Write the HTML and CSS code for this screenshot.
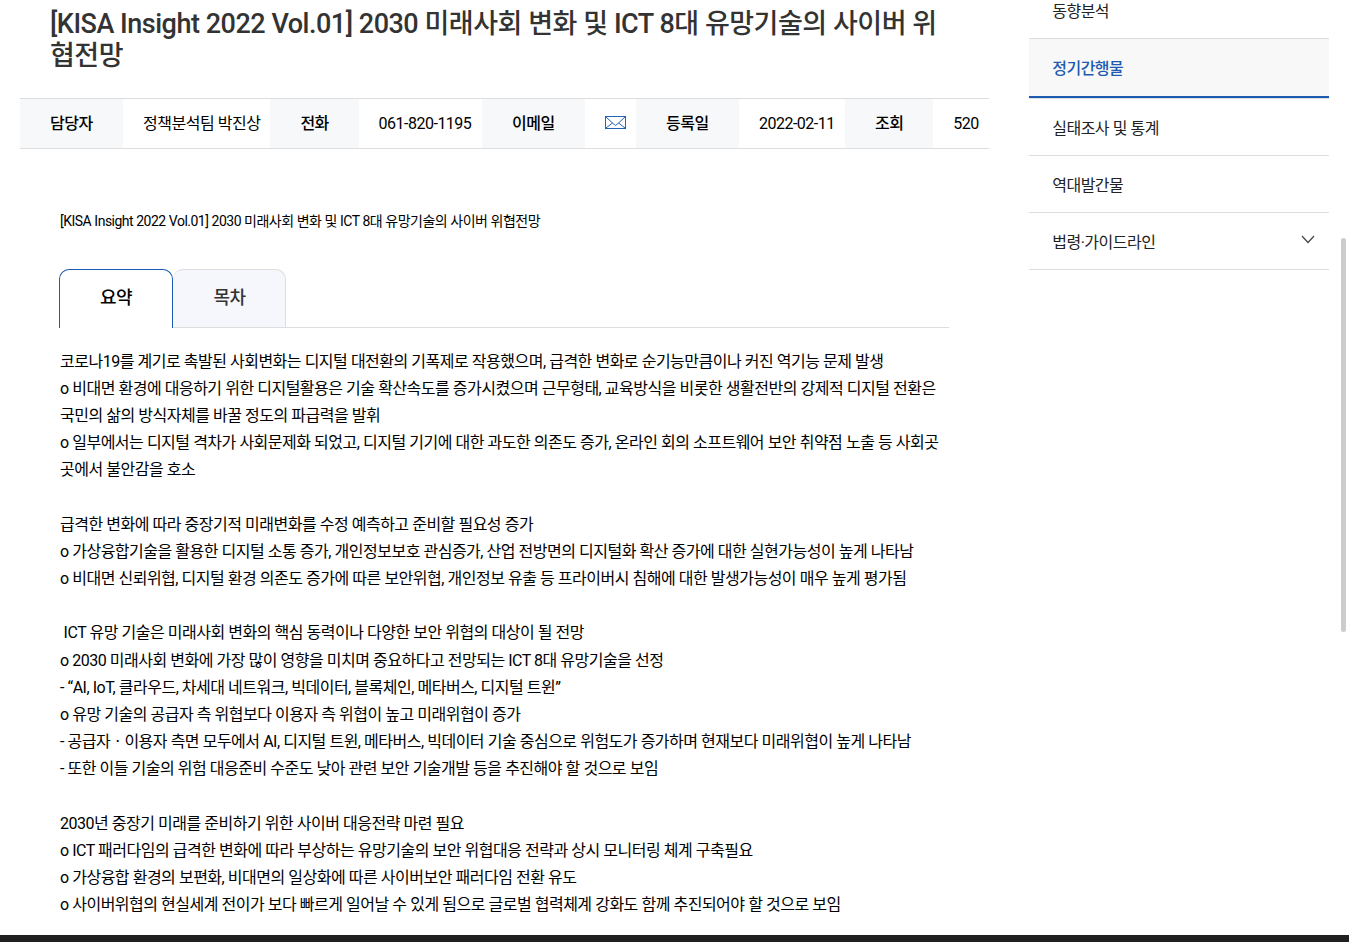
FILE: index.html
```html
<!DOCTYPE html>
<html lang="ko">
<head>
  <meta charset="UTF-8">
  <meta name="viewport" content="width=device-width, initial-scale=1.0">
  <title>KISA Insight 2022 Vol.01</title>
  <link rel="stylesheet" href="styles.css">
</head>
<body>
  <div class="page">
    <main class="content">
      <h1 class="title">[KISA Insight 2022 Vol.01] 2030 미래사회 변화 및 ICT 8대 유망기술의 사이버 위<br>협전망</h1>

      <dl class="info">
        <dt>담당자</dt>
        <dd class="w-name">정책분석팀 박진상</dd>
        <dt class="short">전화</dt>
        <dd class="w-tel">061-820-1195</dd>
        <dt>이메일</dt>
        <dd class="w-mail">
          <svg class="mail" viewBox="0 0 21 13" width="21" height="13">
            <rect x="0.5" y="0.5" width="20" height="12" />
            <path d="M1 1l7 6.500 2.500 2 2.500-2L20 1M1 12l6.500-5M20 12l-6.500-5" />
          </svg>
        </dd>
        <dt>등록일</dt>
        <dd class="w-date">2022-02-11</dd>
        <dt class="short">조회</dt>
        <dd class="w-hit">520</dd>
      </dl>

      <div class="view">
        <p class="subject">[KISA Insight 2022 Vol.01] 2030 미래사회 변화 및 ICT 8대 유망기술의 사이버 위협전망</p>

        <ul class="tabs">
          <li class="tab active">요약</li>
          <li class="tab">목차</li>
        </ul>

        <div class="summary">
          <p>코로나19를 계기로 촉발된 사회변화는 디지털 대전환의 기폭제로 작용했으며, 급격한 변화로 순기능만큼이나 커진 역기능 문제 발생<br>
          o 비대면 환경에 대응하기 위한 디지털활용은 기술 확산속도를 증가시켰으며 근무형태, 교육방식을 비롯한 생활전반의 강제적 디지털 전환은<br>
          국민의 삶의 방식자체를 바꿀 정도의 파급력을 발휘<br>
          o 일부에서는 디지털 격차가 사회문제화 되었고, 디지털 기기에 대한 과도한 의존도 증가, 온라인 회의 소프트웨어 보안 취약점 노출 등 사회곳<br>
          곳에서 불안감을 호소</p>

          <p>급격한 변화에 따라 중장기적 미래변화를 수정 예측하고 준비할 필요성 증가<br>
          o 가상융합기술을 활용한 디지털 소통 증가, 개인정보보호 관심증가, 산업 전방면의 디지털화 확산 증가에 대한 실현가능성이 높게 나타남<br>
          o 비대면 신뢰위협, 디지털 환경 의존도 증가에 따른 보안위협, 개인정보 유출 등 프라이버시 침해에 대한 발생가능성이 매우 높게 평가됨</p>

          <p>&nbsp;ICT 유망 기술은 미래사회 변화의 핵심 동력이나 다양한 보안 위협의 대상이 될 전망<br>
          o 2030 미래사회 변화에 가장 많이 영향을 미치며 중요하다고 전망되는 ICT 8대 유망기술을 선정<br>
          - “AI, IoT, 클라우드, 차세대 네트워크, 빅데이터, 블록체인, 메타버스, 디지털 트윈”<br>
          o 유망 기술의 공급자 측 위협보다 이용자 측 위협이 높고 미래위협이 증가<br>
          - 공급자ㆍ이용자 측면 모두에서 AI, 디지털 트윈, 메타버스, 빅데이터 기술 중심으로 위험도가 증가하며 현재보다 미래위협이 높게 나타남<br>
          - 또한 이들 기술의 위험 대응준비 수준도 낮아 관련 보안 기술개발 등을 추진해야 할 것으로 보임</p>

          <p>2030년 중장기 미래를 준비하기 위한 사이버 대응전략 마련 필요<br>
          o ICT 패러다임의 급격한 변화에 따라 부상하는 유망기술의 보안 위협대응 전략과 상시 모니터링 체계 구축필요<br>
          o 가상융합 환경의 보편화, 비대면의 일상화에 따른 사이버보안 패러다임 전환 유도<br>
          o 사이버위협의 현실세계 전이가 보다 빠르게 일어날 수 있게 됨으로 글로벌 협력체계 강화도 함께 추진되어야 할 것으로 보임</p>
        </div>
      </div>
    </main>

    <nav class="side">
      <ul>
        <li class="first">동향분석</li>
        <li class="active">정기간행물</li>
        <li>실태조사 및 통계</li>
        <li>역대발간물</li>
        <li>법령·가이드라인
          <svg class="arrow" viewBox="0 0 14 9" width="14" height="9"><path d="M1 1l6 6.500L13 1" /></svg>
        </li>
      </ul>
    </nav>
  </div>

  <div class="scrollbar"></div>
  <footer class="bottom"></footer>
</body>
</html>
```

FILE: styles.css
```css
* {
  box-sizing: border-box;
}
body {
  margin: 0;
  height: 942px;
  overflow: hidden;
  display: flex;
  flex-direction: column;
  background: #fff;
  color: #000;
  font-family: Roboto, "Noto Sans CJK KR", sans-serif;
  font-size: 16px;
  font-weight: 400;
  letter-spacing: -0.5px;
  word-spacing: 0.12px;
}
h1, p, ul, dl, dd {
  margin: 0;
  padding: 0;
  list-style: none;
}
.page {
  display: flex;
  gap: 40px;
  height: 935px;
  padding: 0 20px;
}
.content {
  width: 969px;
}
.title {
  height: 98px;
  padding: 8px 0 0 30px;
  color: #333;
  font-size: 27px;
  font-weight: 500;
  line-height: 32px;
  letter-spacing: -0.5px;
  white-space: nowrap;
}

/* document info row */
.info {
  display: flex;
  height: 51px;
  border-top: 1px solid #ddd;
  border-bottom: 1px solid #ddd;
  line-height: 49px;
  white-space: nowrap;
}
.info dt {
  width: 103px;
  padding-left: 30px;
  background: #f6f8fa;
  font-weight: 500;
}
.info dt.short {
  width: 88.200px;
}
.info dd {
  padding-left: 20px;
}
.w-name {
  width: 147.400px;
}
.w-tel {
  width: 123.400px;
}
.w-mail {
  width: 51px;
}
.w-date {
  width: 106px;
}
.w-hit {
  flex: 1;
}
.mail {
  display: block;
  margin-top: 17px;
  fill: none;
  stroke: #2463b4;
}

.view {
  padding: 59px 40px 0;
}
.subject {
  height: 61px;
  font-size: 14px;
  line-height: 27px;
}
.tabs {
  display: flex;
  height: 59px;
  margin-left: -1px;
  border-bottom: 1px solid #ddd;
}
.tab {
  width: 113px;
  height: 58px;
  padding-left: 1px;
  border: 1px solid #ddd;
  border-bottom: 0;
  border-left: 0;
  border-radius: 10px 10px 0 0;
  background: #f6f7fc;
  color: #333;
  font-size: 18px;
  font-weight: 500;
  line-height: 56px;
  text-align: center;
}
.tab.active {
  width: 114px;
  height: 59px;
  padding-left: 0;
  border: 1px solid #1c5bb0;
  border-bottom: 0;
  background: #fff;
  color: #000;
}
.summary {
  padding-top: 19.600px;
  line-height: 27.190px;
  white-space: nowrap;
}
.summary p + p {
  margin-top: 27.190px;
}

/* side menu */
.side {
  width: 300px;
}
.side li {
  display: flex;
  justify-content: space-between;
  height: 57px;
  padding: 0 14.500px 0 23.200px;
  border-bottom: 1px solid #ddd;
  color: #222;
  line-height: 59px;
}
.side li.first {
  height: 39px;
  line-height: 24px;
}
.side li.active {
  height: 60px;
  background: #f8f8f8;
  border-bottom: 1px solid #ddd;
  box-shadow: inset 0 -2px #1c5bb0;
  color: #1c5bb0;
  font-weight: 500;
}
.arrow {
  margin-top: 22px;
  fill: none;
  stroke: #444;
  stroke-width: 1.2;
}

.scrollbar {
  position: absolute;
  top: 238px;
  right: 3px;
  width: 5px;
  height: 394px;
  border-radius: 3px;
  background: #ccc;
}
.bottom {
  height: 7px;
  background: #202020;
}
```
